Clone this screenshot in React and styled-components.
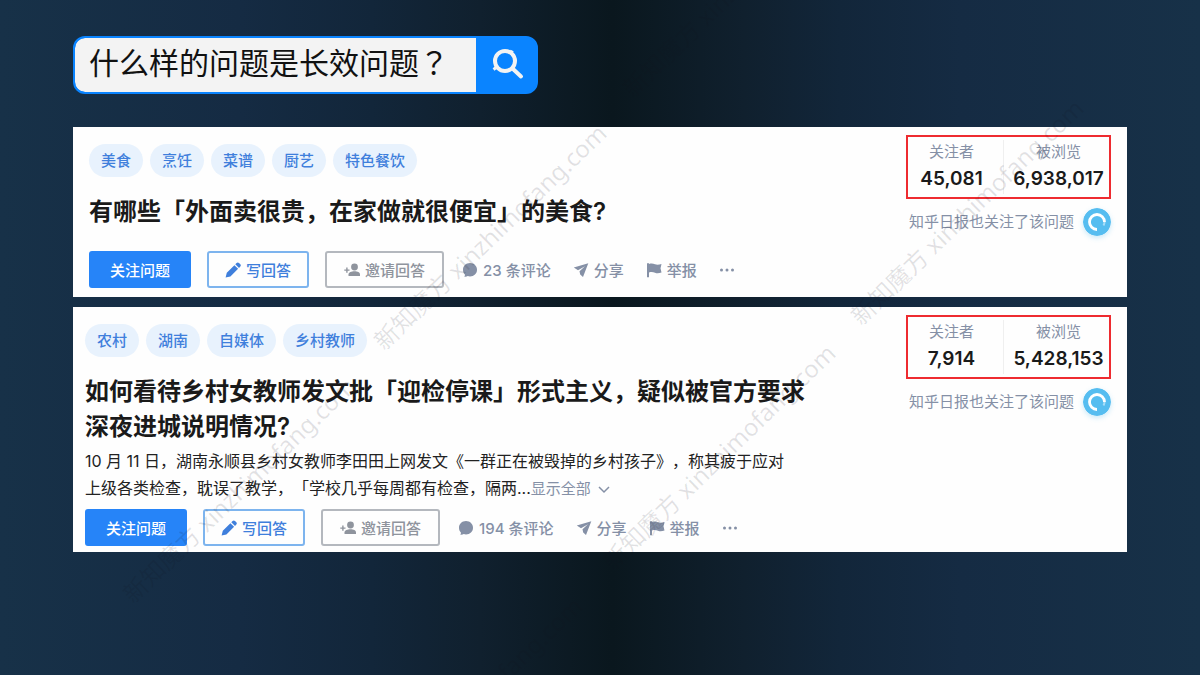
import styled, { createGlobalStyle } from "styled-components";

const cards = [
  {
    id: 'food',
    inset: 16,
    bottom: 9,
    tags: ['美食', '烹饪', '菜谱', '厨艺', '特色餐饮'],
    title: '有哪些「外面卖很贵，在家做就很便宜」的美食?',
    comments: 23,
    followers: '45,081',
    views: '6,938,017',
  },
  {
    id: 'village',
    inset: 12,
    bottom: 6,
    tags: ['农村', '湖南', '自媒体', '乡村教师'],
    title: '如何看待乡村女教师发文批「迎检停课」形式主义，疑似被官方要求深夜进城说明情况?',
    excerpt: '10 月 11 日，湖南永顺县乡村女教师李田田上网发文《一群正在被毁掉的乡村孩子》，称其疲于应对上级各类检查，耽误了教学，「学校几乎每周都有检查，隔两...',
    comments: 194,
    followers: '7,914',
    views: '5,428,153',
  },
];

const marks = [
  { x: 627, y: 92 },
  { x: 378, y: 345 },
  { x: 855, y: 320 },
  { x: 127, y: 598 },
  { x: 607, y: 565 },
  { x: 354, y: 818 },
];

const SearchIcon = () => (
  <svg width="34" height="34" viewBox="0 0 34 34" fill="none" stroke="#f3f3f3" aria-hidden="true">
    <circle cx="14" cy="13" r="10" strokeWidth="4" />
    <path d="M21.500 20.500l8.500 8" strokeWidth="4" strokeLinecap="round" />
    <path d="M2.500 21.500l4-3M19 3l3 1.500" strokeWidth="3" />
  </svg>
);

const PenIcon = () => (
  <svg width="16" height="16" viewBox="0 0 16 16" fill="currentColor" aria-hidden="true">
    <path d="M.6 15.600l1.200-4.800L9.400 3.200l3.700 3.600-7.700 7.600-4.800 1.200zM10.300 2.300l1.300-1.300c.7-.7 1.700-.7 2.400 0l1.300 1.300c.7.700.7 1.700 0 2.300L14 5.900l-3.700-3.600z" />
  </svg>
);

const InviteIcon = () => (
  <svg width="16" height="16" viewBox="0 0 16 16" fill="currentColor" aria-hidden="true">
    <circle cx="10.500" cy="5" r="3.400" />
    <path d="M4.500 14v-1.500c0-2.200 3-3.300 6-3.300s5.500 1.100 5.500 3.300V14H4.500z" />
    <path d="M2.200 5.500h1.400v1.900h1.900v1.400H3.600v1.900H2.200V8.800H.3V7.400h1.900V5.500z" />
  </svg>
);

const CommentIcon = () => (
  <svg width="16" height="16" viewBox="0 0 16 16" fill="currentColor" aria-hidden="true">
    <path d="M8 1c4 0 7 2.900 7 6.700 0 3.800-3 6.700-7 6.700-.8 0-1.500-.1-2.200-.3-.9.600-2.200.9-3.500.7.500-.7.700-1.500.6-2.300C1.700 11.300 1 9.600 1 7.700 1 3.900 4 1 8 1z" />
  </svg>
);

const ShareIcon = () => (
  <svg width="16" height="16" viewBox="0 0 16 16" fill="currentColor" aria-hidden="true">
    <path d="M.8 5.600L15.300 1.300 10 14.900 7.200 12.500 6.500 9.200 12 4.300 5 8.300.8 5.600z" />
  </svg>
);

const FlagIcon = () => (
  <svg width="16" height="16" viewBox="0 0 16 16" fill="currentColor" aria-hidden="true">
    <path d="M1 1.200h2v14H1z" />
    <path d="M3 2c2.500-1 4.300-.4 6 .3 2 .8 4 .5 6.500-.3l-1 4.200 1 4.300c-2.500.8-4.500 1-6.500.2-1.700-.7-3.500-1.200-6-.3V2z" />
  </svg>
);

const DotsIcon = () => (
  <svg width="16" height="16" viewBox="0 0 16 16" fill="currentColor" aria-hidden="true">
    <circle cx="2.500" cy="8" r="1.500" />
    <circle cx="8" cy="8" r="1.500" />
    <circle cx="13.500" cy="8" r="1.500" />
  </svg>
);

const ChevronIcon = () => (
  <svg width="14" height="14" viewBox="0 0 14 14" fill="none" stroke="currentColor" strokeWidth="1.500" aria-hidden="true">
    <path d="M2 5l5 5 5-5" />
  </svg>
);

const DailyLogo = () => (
  <svg width="28" height="28" viewBox="0 0 28 28" fill="none" aria-hidden="true">
    <circle cx="14" cy="14" r="14" fill="#56bdf0" />
    <path d="M21.500 14A7.500 7.500 0 1 0 14 21.500" stroke="#fff" strokeWidth="2.800" />
    <path d="M21.500 14A7.500 7.500 0 0 1 20.500 17.500" stroke="#a9def8" strokeWidth="2" />
  </svg>
);

function Question({ card }) {
  return (
    <Card $inset={card.inset} $bottom={card.bottom}>
      <Main>
        <Tags>
          {card.tags.map(tag => <Tag key={tag} href="#">{tag}</Tag>)}
        </Tags>
        <Title>{card.title}</Title>
        {card.excerpt && (
          <Excerpt>
            {card.excerpt}
            <More type="button">显示全部 <ChevronIcon /></More>
          </Excerpt>
        )}
        <Actions $tight={Boolean(card.excerpt)}>
          <Button type="button" $kind="primary">关注问题</Button>
          <Button type="button" $kind="outline"><PenIcon />写回答</Button>
          <Button type="button" $kind="quiet"><InviteIcon />邀请回答</Button>
          <Links>
            <TextButton type="button"><CommentIcon />{card.comments} 条评论</TextButton>
            <TextButton type="button"><ShareIcon />分享</TextButton>
            <TextButton type="button"><FlagIcon />举报</TextButton>
            <TextButton type="button" aria-label="更多"><DotsIcon /></TextButton>
          </Links>
        </Actions>
      </Main>
      <Side>
        <Stats>
          <Stat>
            <dt>关注者</dt>
            <dd>{card.followers}</dd>
          </Stat>
          <Stat>
            <dt>被浏览</dt>
            <dd>{card.views}</dd>
          </Stat>
        </Stats>
        <Note>知乎日报也关注了该问题<DailyLogo /></Note>
      </Side>
    </Card>
  )
}

function App() {
  return (
    <Page>
      <GlobalStyle />
      <Search onSubmit={e => e.preventDefault()}>
        <SearchInput type="text" aria-label="搜索" defaultValue="什么样的问题是长效问题？" />
        <SearchButton type="submit" aria-label="搜索"><SearchIcon /></SearchButton>
      </Search>
      <List>
        {cards.map(card => <Question key={card.id} card={card} />)}
      </List>
      <Overlay aria-hidden="true">
        {marks.map(({ x, y }) => (
          <Mark key={x} style={{ left: x, top: y }}>新知魔方 xinzhimofang.com</Mark>
        ))}
      </Overlay>
    </Page>
  )
}

const GlobalStyle = createGlobalStyle`
  * {
    box-sizing: border-box;
  }

  body {
    margin: 0;
    font-family: Inter, "Noto Sans CJK SC", sans-serif;
    text-spacing-trim: space-all;
  }

  button, input {
    font-family: inherit;
  }

  svg {
    flex-shrink: 0;
  }
`;

const Page = styled.main`
  position: relative;
  min-height: 100vh;
  padding: 36px 73px;
  overflow: hidden;
  background: linear-gradient(90deg, #173148 0%, #152b43 20%, #12263a 31%, #10202e 40%, #0a171e 51%, #10202e 62%, #12263a 70%, #152b43 80%, #173148 100%);
`;

const Search = styled.form`
  width: 465px;
  max-width: 100%;
  height: 58px;
  display: flex;
  border: 2px solid #0a84ff;
  border-radius: 12px;
  background: #0a84ff;
  overflow: hidden;
`;

const SearchInput = styled.input`
  flex: 1;
  min-width: 0;
  padding: 0 14px 8px;
  border: 0;
  border-radius: 10px 0 0 10px;
  outline: none;
  background: #f3f3f3;
  color: #111;
  font-family: "Noto Sans CJK TC", sans-serif;
  font-size: 30px;
`;

const SearchButton = styled.button`
  width: 60px;
  padding: 0 0 0 4px;
  display: flex;
  align-items: center;
  justify-content: center;
  border: 0;
  background: transparent;
`;

const List = styled.div`
  margin-top: 33px;
  display: flex;
  flex-direction: column;
  gap: 10px;
`;

const Card = styled.section`
  padding: 8px 16px ${props => props.$bottom}px ${props => props.$inset}px;
  display: flex;
  justify-content: space-between;
  align-items: flex-start;
  background: #fefefe;
`;

const Main = styled.div`
  flex: 1;
  min-width: 0;
  padding-top: 9px;
`;

const Tags = styled.div`
  display: flex;
  flex-wrap: wrap;
  gap: 7px;
`;

const Tag = styled.a`
  height: 33px;
  padding: 0 12px;
  border-radius: 17px;
  background: #e8f2fd;
  color: #3f7fdc;
  font-size: 15px;
  font-weight: 500;
  line-height: 33px;
  text-decoration: none;
`;

const Title = styled.h2`
  max-width: 730px;
  margin: 17px 0 0;
  color: #1a1a1a;
  font-size: 24px;
  font-weight: 600;
  line-height: 35px;
`;

const Excerpt = styled.p`
  max-width: 710px;
  margin: 4px 0 0;
  color: #222;
  font-size: 16px;
  line-height: 27px;
`;

const More = styled.button`
  padding: 0;
  border: 0;
  background: none;
  color: #8590a6;
  font-size: 15px;

  svg {
    margin-left: 2px;
    vertical-align: -2px;
  }
`;

const Actions = styled.div`
  margin-top: ${props => props.$tight ? 7 : 22}px;
  display: flex;
  align-items: center;
  gap: 16px;
`;

const buttonKinds = {
  primary: { color: '#fff', border: '#2684f8', background: '#2684f8', padding: 19 },
  outline: { color: '#3f7fdc', border: '#7db4ee', background: 'transparent', padding: 16 },
  quiet: { color: '#8f949d', border: '#b4b8be', background: 'transparent', padding: 17 },
};

const Button = styled.button`
  height: 37px;
  padding: 0 ${props => buttonKinds[props.$kind].padding}px;
  display: flex;
  align-items: center;
  gap: 5px;
  border: 2px solid ${props => buttonKinds[props.$kind].border};
  border-radius: 3px;
  background: ${props => buttonKinds[props.$kind].background};
  color: ${props => buttonKinds[props.$kind].color};
  font-size: 15px;
  font-weight: 500;
  white-space: nowrap;
`;

const Links = styled.div`
  margin-left: 2px;
  display: flex;
  gap: 22px;
`;

const TextButton = styled.button`
  padding: 0;
  display: flex;
  align-items: center;
  gap: 5px;
  border: 0;
  background: none;
  color: #8590a6;
  font-size: 15px;
  font-weight: 500;
  white-space: nowrap;
`;

const Side = styled.aside`
  width: 205px;
  flex-shrink: 0;
`;

const Stats = styled.dl`
  margin: 0;
  padding: 3px 0;
  display: grid;
  grid-template-columns: 95px 1fr;
  border: 2px solid #ee2b30;
`;

const Stat = styled.div`
  padding-right: 8px;
  text-align: center;

  & + & {
    padding: 0 0 0 4px;
    border-left: 1px solid #efefef;
  }

  dt {
    color: #8590a6;
    font-size: 15px;
    line-height: 24px;
  }

  dd {
    margin: 0;
    color: #1a1a1a;
    font-size: 19px;
    font-weight: 600;
    line-height: 30px;
  }
`;

const Note = styled.div`
  margin-top: 9px;
  padding-left: 3px;
  display: flex;
  justify-content: space-between;
  align-items: center;
  color: #8590a6;
  font-size: 15px;
  line-height: 28px;
  white-space: nowrap;

  svg {
    border-radius: 50%;
    box-shadow: 0 2px 5px rgba(86, 189, 240, 0.3);
  }
`;

const Overlay = styled.div`
  position: absolute;
  inset: 0;
  overflow: hidden;
  pointer-events: none;
`;

const Mark = styled.span`
  position: absolute;
  color: rgba(20, 20, 30, 0.12);
  font-family: "Noto Sans", "Noto Sans CJK SC", sans-serif;
  font-size: 24px;
  line-height: 24px;
  white-space: nowrap;
  transform: translateY(-50%) rotate(-44deg);
  transform-origin: left center;
`;

export default App;
